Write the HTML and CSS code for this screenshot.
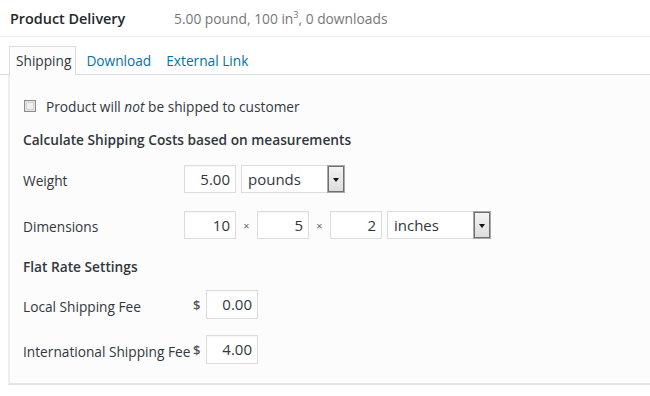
FILE: index.html
```html
<!DOCTYPE html>
<html lang="en">
<head>
    <meta charset="UTF-8">
    <title>Product Delivery</title>
    <link rel="stylesheet" href="styles.css">
</head>
<body>
    <div class="header">
        <h2 class="title">Product Delivery</h2>
        <span class="summary">5.00 pound, 100 in<sup>3</sup>, 0 downloads</span>
    </div>

    <ul class="tabs">
        <li class="tab active">Shipping</li>
        <li class="tab"><a href="#">Download</a></li>
        <li class="tab"><a href="#">External Link</a></li>
    </ul>

    <div class="panel">
        <label class="check-row">
            <span class="checkbox"></span>
            <span>Product will <em>not</em> be shipped to customer</span>
        </label>

        <h4 class="section">Calculate Shipping Costs based on measurements</h4>

        <div class="row">
            <span class="label">Weight</span>
            <span class="field">5.00</span>
            <div class="select">
                <span>pounds</span>
                <span class="arrow"></span>
            </div>
        </div>

        <div class="row">
            <span class="label">Dimensions</span>
            <span class="field">10</span>
            <span class="times">×</span>
            <span class="field">5</span>
            <span class="times">×</span>
            <span class="field">2</span>
            <div class="select">
                <span>inches</span>
                <span class="arrow"></span>
            </div>
        </div>

        <h4 class="section flat">Flat Rate Settings</h4>

        <div class="row fee">
            <span class="label fee-label">Local Shipping Fee</span>
            <span class="currency">$</span>
            <span class="field">0.00</span>
        </div>

        <div class="row fee">
            <span class="label fee-label">International Shipping Fee</span>
            <span class="currency">$</span>
            <span class="field">4.00</span>
        </div>
    </div>
</body>
</html>
```

FILE: styles.css
```css
body {
    margin: 0;
    background-color: #fff;
    color: #444;
    font-family: "Open Sans", "Liberation Sans", sans-serif;
    font-size: 13.7px;
}
.header {
    display: flex;
    align-items: center;
    height: 36px;
    padding-left: 10px;
    border-bottom: 1px solid #eee;
}
.title {
    width: 164px;
    margin: 0;
    font-size: 14.4px;
    font-weight: 600;
    color: #23282d;
}
.summary {
    font-size: 13.8px;
    color: #777;
}
.summary sup {
    font-size: 9px;
    line-height: 0;
}
.tabs {
    display: flex;
    list-style: none;
    margin: 9px 0 0;
    padding: 0 0 0 9px;
    border-bottom: 1px solid #ddd;
}
.tab {
    height: 27px;
    line-height: 27px;
    padding: 0 4px 0 6px;
    margin-right: 3px;
    border: 1px solid transparent;
    border-bottom: none;
    margin-bottom: -1px;
}
.tab a {
    color: #0073aa;
    text-decoration: none;
}
.tab.active {
    border-color: #ddd;
    background-color: #fcfcfc;
    color: #32373c;
    height: 28px;
}
.panel {
    background-color: #fcfcfc;
    border-left: 2px solid #eee;
    border-bottom: 2px solid #e5e5e5;
    margin-left: 8px;
    padding: 20px 0 19px 13px;
    color: #32373c;
}
.check-row {
    display: flex;
    align-items: center;
    height: 22px;
    gap: 10px;
    margin-left: 1px;
}
.checkbox {
    width: 10px;
    height: 10px;
    border: 1px solid #8c8c8c;
    box-shadow: inset 0 0 0 1px #e6e6e6, inset 0 0 0 2px #d0d0d0;
    background-color: #f1f1f1;
}
.check-row em {
    font-style: italic;
}
.section {
    margin: 12px 0 0;
    height: 22px;
    line-height: 22px;
    font-size: 13.7px;
    font-weight: 600;
    color: #32373c;
}
.section.flat {
    margin-top: 17px;
}
.row {
    display: flex;
    align-items: center;
    height: 28px;
    margin-top: 18px;
}
.section + .row {
    margin-top: 14px;
}
.label {
    width: 161px;
    padding-top: 2px;
}
.field {
    box-sizing: border-box;
    width: 52px;
    height: 28px;
    line-height: 26px;
    padding-right: 5px;
    text-align: right;
    font-size: 15px;
    color: #32373c;
    background-color: #fff;
    border: 1px solid #ddd;
    box-shadow: inset 0 1px 2px rgba(0, 0, 0, 0.04);
}
.times {
    width: 21px;
    text-align: center;
    font-size: 11px;
    color: #666;
}
.select {
    box-sizing: border-box;
    display: flex;
    align-items: center;
    justify-content: space-between;
    width: 104px;
    height: 28px;
    margin-left: 5px;
    padding-left: 6px;
    font-size: 15px;
    color: #32373c;
    background-color: #fff;
    border: 1px solid #ddd;
}
.arrow {
    position: relative;
    box-sizing: border-box;
    width: 18px;
    height: 28px;
    margin-right: -1px;
    border: 1px solid #aaa;
    box-shadow: inset 0 0 0 1px #707070;
    background: linear-gradient(#f4f4f4, #dcdcdc);
}
.arrow::after {
    content: "";
    position: absolute;
    left: 5px;
    top: 12px;
    border-left: 3.5px solid transparent;
    border-right: 3.5px solid transparent;
    border-top: 4px solid #111;
}
.row.fee {
    margin-top: 12px;
    height: 29px;
}
.row.fee + .row.fee {
    margin-top: 16px;
}
.fee-label {
    width: 170px;
    padding-top: 4px;
}
.currency {
    width: 13px;
    font-size: 13px;
    font-weight: 600;
    color: #555;
}
.fee .field {
    height: 29px;
    line-height: 27px;
}
```
